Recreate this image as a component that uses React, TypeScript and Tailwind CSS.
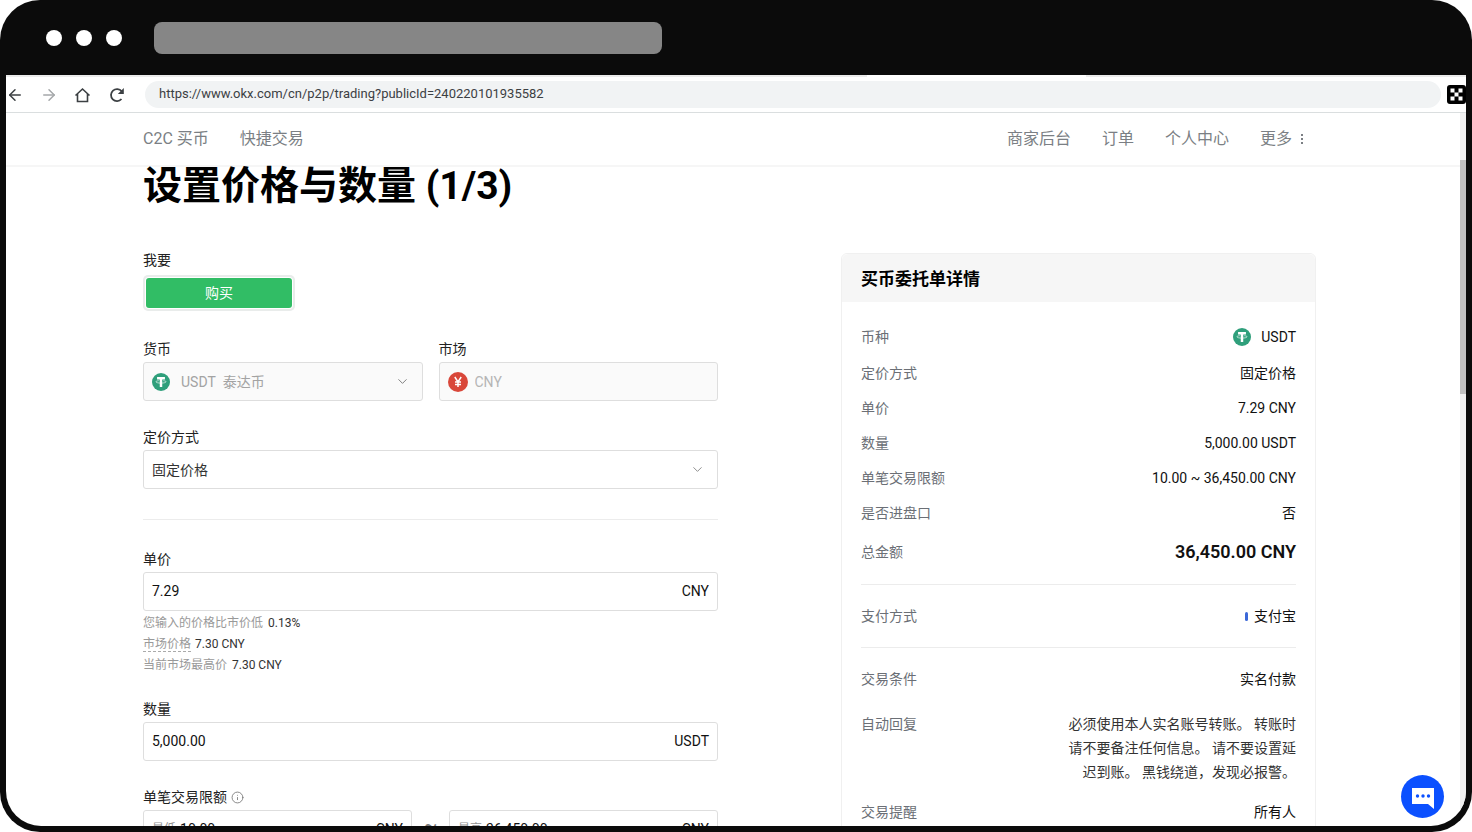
import type { ReactNode } from "react";
import { ArrowLeft, ArrowRight, ChevronDown, Info } from "lucide-react";

const summary = [
  { label: "定价方式", value: "固定价格" },
  { label: "单价", value: "7.29 CNY" },
  { label: "数量", value: "5,000.00 USDT" },
  { label: "单笔交易限额", value: "10.00 ~ 36,450.00 CNY" },
  { label: "是否进盘口", value: "否" },
];

function TetherIcon() {
  return (
    <svg viewBox="0 0 32 32" className="h-[18px] w-[18px] shrink-0" aria-hidden="true">
      <circle cx="16" cy="16" r="16" fill="#2f9f7b" />
      <path d="M9 7h14v4.500H18.200V25h-4.400V11.500H9z" fill="#fff" />
      <path
        d="M12 13.600c-3 .4-5 1.100-5 2 0 1.300 4 2.400 9 2.400s9-1.100 9-2.400c0-.9-2-1.600-5-2"
        fill="none"
        stroke="#fff"
        strokeOpacity="0.8"
        strokeWidth="1.400"
      />
    </svg>
  );
}

function YuanIcon() {
  return (
    <svg viewBox="0 0 20 20" className="h-5 w-5 shrink-0" aria-hidden="true">
      <circle cx="10" cy="10" r="10" fill="#d9473a" />
      <path
        d="M6.800 5l3.200 4.800L13.200 5M10 9.800V15M7 10h6M7 12.400h6"
        fill="none"
        stroke="#fff"
        strokeWidth="1.500"
      />
    </svg>
  );
}

function OkxIcon() {
  return (
    <svg viewBox="0 0 19 19" className="h-[19px] w-[19px] shrink-0" aria-hidden="true">
      <rect width="19" height="19" rx="3" fill="#000" />
      <path
        d="M3.500 3.500h4v4h-4zM11.500 3.500h4v4h-4zM7.500 7.500h4v4h-4zM3.500 11.500h4v4h-4zM11.500 11.500h4v4h-4z"
        fill="#fff"
      />
    </svg>
  );
}

function Field({ id, label, children }: { id: string; label: ReactNode; children: ReactNode }) {
  return (
    <div className="min-w-0 flex-1">
      <label htmlFor={id} className="mb-[3px] flex h-5 items-center gap-1 leading-5 text-[#222]">
        {label}
      </label>
      {children}
    </div>
  );
}

function NumberBox({ id, value, unit, prefix, label }: { id: string; value: string; unit: string; prefix?: string; label?: string }) {
  return (
    <div className="flex h-[39px] min-w-0 flex-1 items-center rounded-[3px] border border-[#dedede] px-2 pb-[2px]">
      {prefix && <span className="mr-1 text-xs text-[#929292]">{prefix}</span>}
      <input id={id} aria-label={label} defaultValue={value} className="min-w-0 flex-1 text-[#111] outline-none" />
      <span className="text-[#111]">{unit}</span>
    </div>
  );
}

function Row({ label, children }: { label: string; children: ReactNode }) {
  return (
    <div className="flex justify-between leading-6">
      <dt className="text-[#6b6f76]">{label}</dt>
      <dd className="text-right text-[#111]">{children}</dd>
    </div>
  );
}

function Toolbar() {
  return (
    <div className="border-b border-[#dadedf] bg-white">
      <div className="flex h-[2px]">
        <div className="w-[59%] bg-[#ebebeb]" />
        <div className="w-[15%]" />
        <div className="flex-1 bg-[#ebebeb]" />
      </div>
      <div className="flex h-[35px] items-center">
        <div className="flex w-[139px] shrink-0 items-center gap-4 text-[#3c4043]">
          <button aria-label="后退">
            <ArrowLeft size={18} strokeWidth={2} />
          </button>
          <button aria-label="前进" className="text-[#a5a8aa]">
            <ArrowRight size={18} strokeWidth={2} />
          </button>
          <button aria-label="主页">
            <svg viewBox="0 0 18 18" className="h-[18px] w-[18px]" fill="none" stroke="currentColor" strokeWidth="1.600">
              <path d="M1.500 9.500L8.500 3l7 6.500M3.500 8v7.500h10V8" />
            </svg>
          </button>
          <button aria-label="重新加载">
            <svg viewBox="0 0 18 18" className="h-[18px] w-[18px]" fill="none" stroke="currentColor" strokeWidth="1.800">
              <path d="M13.500 13a6 6 0 1 1 .2-7.700" />
              <path d="M15.800 2v6H9.800z" fill="currentColor" stroke="none" />
            </svg>
          </button>
        </div>
        <input
          aria-label="地址"
          defaultValue="https://www.okx.com/cn/p2p/trading?publicId=240220101935582"
          className="h-[27px] min-w-0 flex-1 rounded-full bg-[#f1f3f4] px-[14px] pb-[3px] text-[13px] text-[#3c4043] outline-none"
        />
        <div className="ml-[6px]">
          <OkxIcon />
        </div>
      </div>
    </div>
  );
}

function Navbar() {
  return (
    <header className="border-b-2 border-[#f6f6f6]">
      <nav className="mx-auto flex h-[52px] max-w-[1180px] items-center justify-between pr-[19px] text-base text-[#7b7f84]">
        <div className="flex gap-[31px]">
          <a href="#buy">C2C 买币</a>
          <a href="#express">快捷交易</a>
        </div>
        <div className="flex gap-[31px]">
          <a href="#merchant">商家后台</a>
          <a href="#orders">订单</a>
          <a href="#profile">个人中心</a>
          <a href="#more" className="flex items-center gap-2">
            更多
            <svg viewBox="0 0 4 12" className="h-3 w-1" fill="currentColor" aria-hidden="true">
              <path d="M1 1h2v2H1zM1 5h2v2H1zM1 9h2v2H1z" />
            </svg>
          </a>
        </div>
      </nav>
    </header>
  );
}

function OrderForm() {
  return (
    <form className="min-w-0">
      <p className="leading-5 text-[#222]">我要</p>
      <div className="mt-[5px] w-[152px] rounded-[5px] bg-[#e9eceb] p-[2px]">
        <div className="rounded-[4px] bg-white p-px">
          <button type="button" className="block h-[30px] w-full rounded-[3px] bg-[#31bd65] text-white">
            购买
          </button>
        </div>
      </div>

      <div className="mt-7 flex gap-4">
        <Field id="coin" label="货币">
          <div className="flex h-[39px] items-center rounded-[3px] border border-[#dedede] bg-[#fafafa] pr-3 pl-2">
            <TetherIcon />
            <select id="coin" disabled className="ml-[11px] min-w-0 flex-1 appearance-none text-[#a3a3a3] opacity-100">
              <option>USDT{"\u00a0"} 泰达币</option>
            </select>
            <ChevronDown size={15} strokeWidth={1.5} className="text-[#777]" />
          </div>
        </Field>
        <Field id="market" label="市场">
          <div className="flex h-[39px] items-center rounded-[3px] border border-[#dedede] bg-[#fafafa] px-2">
            <YuanIcon />
            <input id="market" disabled value="CNY" className="ml-[7px] min-w-0 flex-1 text-[#b5b5b5]" />
          </div>
        </Field>
      </div>

      <div className="mt-[26px]">
        <Field id="pricing" label="定价方式">
          <div className="flex h-[39px] items-center rounded-[3px] border border-[#dedede] pr-3 pl-2">
            <select id="pricing" className="min-w-0 flex-1 appearance-none text-[#333] outline-none">
              <option>固定价格</option>
            </select>
            <ChevronDown size={15} strokeWidth={1.5} className="text-[#888]" />
          </div>
        </Field>
      </div>

      <hr className="mt-[30px] mb-[29px] h-px border-0 bg-[#ececec]" />

      <Field id="price" label="单价">
        <NumberBox id="price" value="7.29" unit="CNY" />
      </Field>
      <div className="mt-[2px] text-xs leading-[21px] text-[#999]">
        <p>
          您输入的价格比市价低 <span className="ml-0.5 text-[#333]">0.13%</span>
        </p>
        <p>
          <span className="border-b border-dashed border-[#aaa]">市场价格</span>
          <span className="ml-1 text-[#333]">7.30 CNY</span>
        </p>
        <p>
          当前市场最高价 <span className="ml-0.5 text-[#333]">7.30 CNY</span>
        </p>
      </div>

      <div className="mt-[23px]">
        <Field id="amount" label="数量">
          <NumberBox id="amount" value="5,000.00" unit="USDT" />
        </Field>
      </div>

      <div className="mt-[26px]">
        <Field
          id="limit-min"
          label={
            <>
              单笔交易限额
              <Info size={13} strokeWidth={1.6} className="text-[#777]" />
            </>
          }
        >
          <div className="flex items-start">
            <NumberBox id="limit-min" value="10.00" unit="CNY" prefix="最低" />
            <span className="w-[37px] text-center text-xl leading-[30px] text-[#777]">~</span>
            <NumberBox id="limit-max" value="36,450.00" unit="CNY" prefix="最高" label="最高限额" />
          </div>
        </Field>
      </div>
    </form>
  );
}

function OrderDetails() {
  return (
    <aside className="mt-[3px] min-w-0 rounded-md border border-[#f0f0f0]">
      <h2 className="flex h-[48px] items-center rounded-t-md bg-[#f6f6f6] px-[19px] pt-[2px] text-[17px] font-bold text-black">
        买币委托单详情
      </h2>
      <dl className="px-[19px] pt-[23px] pb-6">
        <Row label="币种">
          <span className="flex items-center gap-[10px]">
            <TetherIcon />
            USDT
          </span>
        </Row>
        <div className="mt-3 flex flex-col gap-[11px]">
          {summary.map((item) => (
            <Row key={item.label} label={item.label}>
              {item.value}
            </Row>
          ))}
        </div>
        <div className="mt-[15px]">
          <Row label="总金额">
            <span className="text-lg leading-6 font-semibold">36,450.00 CNY</span>
          </Row>
        </div>
        <div className="my-[19px] border-y border-[#ececec] py-[19px]">
          <Row label="支付方式">
            <span className="flex items-center gap-[6px]">
              <span className="h-[9px] w-[3px] rounded-sm bg-[#3c68d8]" />
              支付宝
            </span>
          </Row>
        </div>
        <Row label="交易条件">实名付款</Row>
        <div className="mt-[21px] flex justify-between leading-6">
          <dt className="text-[#6b6f76]">自动回复</dt>
          <dd className="w-[230px] text-right text-[#333]">
            必须使用本人实名账号转账。 转账时请不要备注任何信息。 请不要设置延迟到账。 黑钱绕道，发现必报警。
          </dd>
        </div>
        <div className="mt-4">
          <Row label="交易提醒">所有人</Row>
        </div>
      </dl>
    </aside>
  );
}

export default function App() {
  return (
    <div className="relative flex h-screen flex-col overflow-hidden rounded-[40px] bg-[#0b0b0b] px-[6px] pb-[6px] font-[Roboto,'Noto_Sans_CJK_SC',sans-serif] text-sm">
      <div className="flex h-[75px] shrink-0 items-center px-10">
        <div className="flex gap-[14px]">
          <span className="h-4 w-4 rounded-full bg-white" />
          <span className="h-4 w-4 rounded-full bg-white" />
          <span className="h-4 w-4 rounded-full bg-white" />
        </div>
        <div className="ml-8 h-8 w-full max-w-[508px] rounded-lg bg-[#868686]" />
      </div>

      <div className="flex min-h-0 flex-1 flex-col overflow-hidden rounded-b-[35px] bg-white">
        <Toolbar />
        <div className="flex min-h-0 flex-1">
          <div className="min-w-0 flex-1 overflow-hidden">
            <Navbar />
            <main className="mx-auto max-w-[1180px] pr-[7px]">
              <h1 className="text-[39px] leading-[38px] font-bold text-black">设置价格与数量 (1/3)</h1>
              <div className="mt-[45px] grid grid-cols-[575fr_475fr] items-start gap-[123px]">
                <OrderForm />
                <OrderDetails />
              </div>
            </main>
          </div>
          <div className="w-[6px] shrink-0 bg-[#f1f1f1] pt-[47px]">
            <div className="h-[234px] bg-[#c1c1c1]" />
          </div>
        </div>
      </div>

      <button
        aria-label="在线客服"
        className="absolute right-[28px] bottom-[14px] flex h-[43px] w-[43px] items-center justify-center rounded-full bg-[#0b50ff]"
      >
        <svg viewBox="0 0 24 24" className="h-6 w-6" aria-hidden="true">
          <path d="M1 3h22v21l-6-5H1z" fill="#fff" />
          <g fill="#0b50ff">
            <circle cx="6.500" cy="11" r="1.700" />
            <circle cx="12" cy="11" r="1.700" />
            <circle cx="17.500" cy="11" r="1.700" />
          </g>
        </svg>
      </button>
    </div>
  );
}
